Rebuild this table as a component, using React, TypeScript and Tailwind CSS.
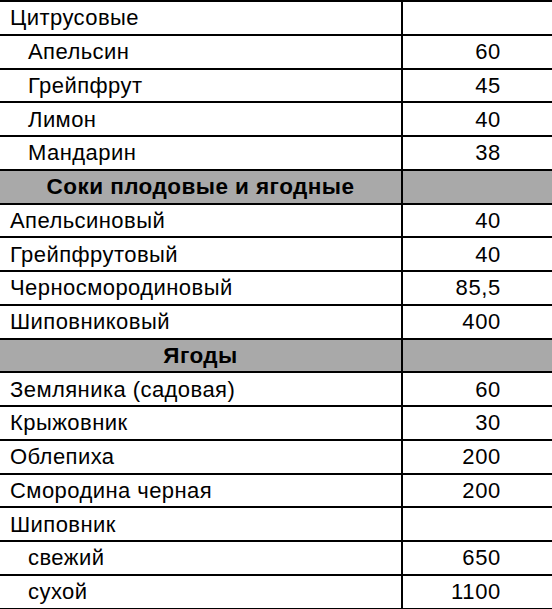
import React from 'react';

type Row =
  | { kind: 'group'; title: string }
  | { kind: 'item'; name: string; value?: string; indent?: boolean };

const rows: Row[] = [
  { kind: 'item', name: 'Цитрусовые' },
  { kind: 'item', name: 'Апельсин', value: '60', indent: true },
  { kind: 'item', name: 'Грейпфрут', value: '45', indent: true },
  { kind: 'item', name: 'Лимон', value: '40', indent: true },
  { kind: 'item', name: 'Мандарин', value: '38', indent: true },
  { kind: 'group', title: 'Соки плодовые и ягодные' },
  { kind: 'item', name: 'Апельсиновый', value: '40' },
  { kind: 'item', name: 'Грейпфрутовый', value: '40' },
  { kind: 'item', name: 'Черносмородиновый', value: '85,5' },
  { kind: 'item', name: 'Шиповниковый', value: '400' },
  { kind: 'group', title: 'Ягоды' },
  { kind: 'item', name: 'Земляника (садовая)', value: '60' },
  { kind: 'item', name: 'Крыжовник', value: '30' },
  { kind: 'item', name: 'Облепиха', value: '200' },
  { kind: 'item', name: 'Смородина черная', value: '200' },
  { kind: 'item', name: 'Шиповник' },
  { kind: 'item', name: 'свежий', value: '650', indent: true },
  { kind: 'item', name: 'сухой', value: '1100', indent: true },
];

const App: React.FC = () => {
  return (
    <div
      className="w-[552px] h-[609px] bg-white text-black overflow-hidden"
      style={{ fontFamily: '"Liberation Sans", Arial, sans-serif' }}
    >
      <div className="border-t-2 border-black">
        {rows.map((row, i) =>
          row.kind === 'group' ? (
            <div key={i} className="flex h-[33.75px] border-b-2 border-black bg-[#a9a9a9]">
              <div className="w-[403px] border-r-2 border-black flex items-center justify-center text-[22.5px] font-bold tracking-[0.02em]">
                {row.title}
              </div>
              <div className="flex-1" />
            </div>
          ) : (
            <div key={i} className="flex h-[33.75px] border-b-2 border-black">
              <div
                className={`w-[403px] border-r-2 border-black flex items-center text-[22px] tracking-[0.02em] ${
                  row.indent ? 'pl-[28px]' : 'pl-[10px]'
                }`}
              >
                {row.name}
              </div>
              <div className="flex-1 flex items-center justify-end pr-[51px] text-[22px] tracking-[0.03em]">
                {row.value}
              </div>
            </div>
          )
        )}
      </div>
    </div>
  );
};

export default App;
